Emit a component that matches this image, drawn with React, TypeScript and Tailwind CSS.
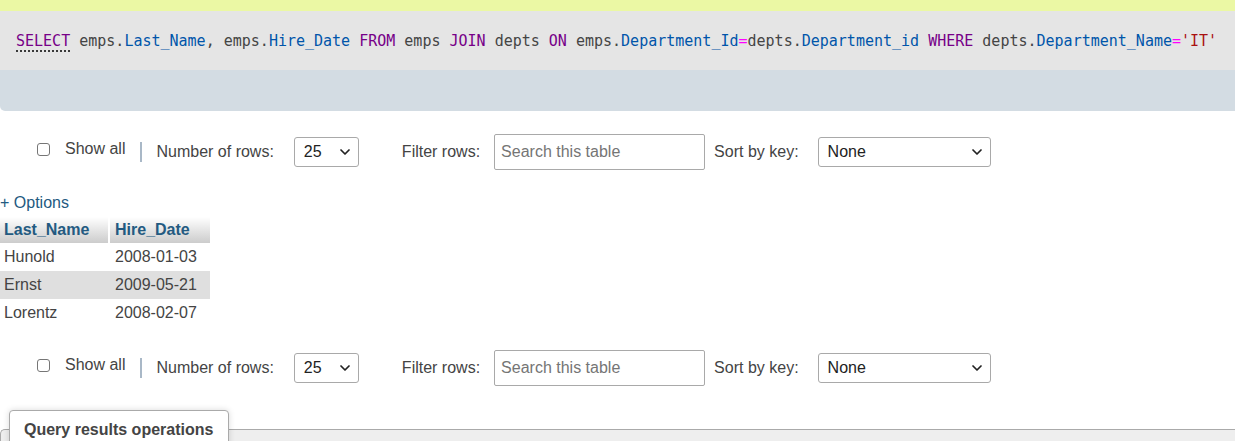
import { ChevronDown } from "lucide-react";

const sans = { fontFamily: '"Liberation Sans", Arial, sans-serif' };

function Select({ value, width }: { value: string; width: string }) {
    return (
        <div className={`${width} h-[30px] flex items-center justify-between border border-[#a9a9a9] rounded-[3px] bg-white pl-[9px] pr-[5px] text-[#222]`}>
            <span>{value}</span>
            <ChevronDown className="w-[16px] h-[16px] text-[#222]" strokeWidth={2.6} />
        </div>
    );
}

function NavRow() {
    return (
        <div className="flex items-center h-[36px] pl-[37px] text-[#444]">
            <div className="flex items-center mb-[6px]">
                <span className="w-[13px] h-[13px] border border-[#767676] rounded-[3px] bg-white" />
                <span className="ml-[15px]">Show all</span>
            </div>
            <span className="ml-[15px] w-[2px] h-[20px] bg-[#a9b8c7]" />
            <span className="ml-[14px]">Number of rows:</span>
            <div className="ml-[20px]">
                <Select value="25" width="w-[65px]" />
            </div>
            <span className="ml-[43px]">Filter rows:</span>
            <div className="ml-[14px] w-[211px] h-[36px] border border-[#a9a9a9] rounded-[2px] flex items-center pl-[6px] text-[#757575]">
                Search this table
            </div>
            <span className="ml-[9px]">Sort by key:</span>
            <div className="ml-[19px]">
                <Select value="None" width="w-[173px]" />
            </div>
        </div>
    );
}

const rows = [
    { name: "Hunold", date: "2008-01-03" },
    { name: "Ernst", date: "2009-05-21" },
    { name: "Lorentz", date: "2008-02-07" },
];

export default function App() {
    return (
        <div className="w-[1235px] h-[441px] overflow-hidden bg-white text-[16px]" style={sans}>
            {/* message bar, scrolled mostly out of view */}
            <div className="h-[11px] bg-[#ebf8a4] overflow-hidden">
                <div className="-mt-[17px] leading-[18px] flex items-center pl-[22px] text-black">
                    <span className="text-[#3a9a2a] w-[20px]">✔</span>
                    Showing rows 0 - 2 (3 total, Query took 0.0012 seconds.)
                </div>
            </div>

            {/* sql box */}
            <div className="rounded-bl-[5px] overflow-hidden">
                <div
                    className="h-[59px] bg-[#e5e5e5] flex items-center pl-[16px] pt-[2px] text-[15px] text-[#444] whitespace-nowrap"
                    style={{ fontFamily: '"DejaVu Sans Mono", "Liberation Mono", monospace' }}
                >
                    <span className="text-[#770088] underline decoration-dotted decoration-black underline-offset-[4px]">SELECT</span>
                    <span>&nbsp;emps.</span>
                    <span className="text-[#0055aa]">Last_Name</span>
                    <span>, emps.</span>
                    <span className="text-[#0055aa]">Hire_Date</span>
                    <span className="text-[#770088]">&nbsp;FROM</span>
                    <span>&nbsp;emps&nbsp;</span>
                    <span className="text-[#770088]">JOIN</span>
                    <span>&nbsp;depts&nbsp;</span>
                    <span className="text-[#770088]">ON</span>
                    <span>&nbsp;emps.</span>
                    <span className="text-[#0055aa]">Department_Id</span>
                    <span className="text-[#ff00ff]">=</span>
                    <span>depts.</span>
                    <span className="text-[#0055aa]">Department_id</span>
                    <span className="text-[#770088]">&nbsp;WHERE</span>
                    <span>&nbsp;depts.</span>
                    <span className="text-[#0055aa]">Department_Name</span>
                    <span className="text-[#ff00ff]">=</span>
                    <span className="text-[#aa1111]">'IT'</span>
                </div>
                <div className="h-[41px] bg-[#d3dce3]" />
            </div>

            <div className="mt-[23px]">
                <NavRow />
            </div>

            <div className="mt-[24px] leading-[18px] text-[#235a81]">+ Options</div>

            {/* results table */}
            <div className="mt-[5px] w-[210px]">
                <div className="flex h-[26px] items-center font-bold text-[#235a81] bg-gradient-to-b from-white to-[#cccccc]">
                    <div className="w-[110px] h-full flex items-center pl-[4px] border-r-2 border-white">Last_Name</div>
                    <div className="w-[100px] pl-[5px]">Hire_Date</div>
                </div>
                {rows.map((r, i) => (
                    <div key={r.name} className={`flex h-[28px] items-center text-[#444] ${i % 2 === 1 ? "bg-[#dfdfdf]" : "bg-white"}`}>
                        <div className="w-[110px] pl-[4px]">{r.name}</div>
                        <div className="w-[100px] pl-[5px]">{r.date}</div>
                    </div>
                ))}
            </div>

            <div className="mt-[23px]">
                <NavRow />
            </div>

            {/* operations fieldset */}
            <div className="relative mt-[43px] h-[40px] bg-[#eeeeee] border-t border-l border-[#aaaaaa] rounded-tl-[5px]">
                <div className="absolute left-[8px] -top-[20px] h-[45px] pl-[14px] pr-[15px] pt-[7px] bg-white border border-[#aaaaaa] rounded-t-[4px] shadow-[0_0_6px_rgba(0,0,0,0.15)] font-bold text-[#444]">
                    Query results operations
                </div>
            </div>
        </div>
    );
}
